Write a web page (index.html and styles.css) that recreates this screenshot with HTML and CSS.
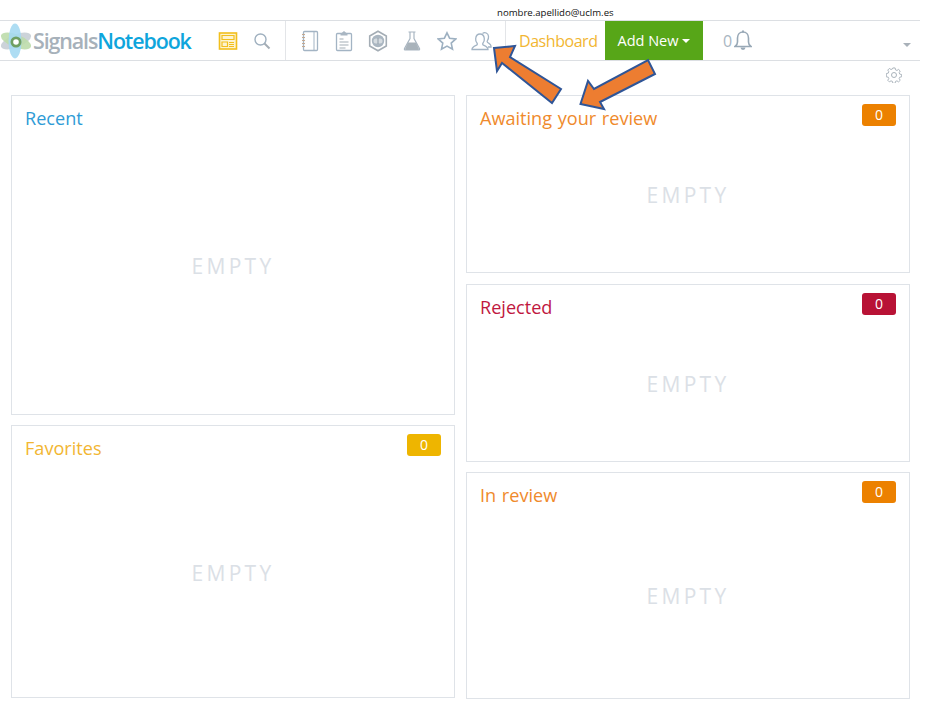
FILE: index.html
```html
<!DOCTYPE html>
<html lang="en">
<head>
<meta charset="utf-8">
<title>Signals Notebook</title>
<link rel="stylesheet" href="styles.css">
</head>
<body>
<div class="page">
  <div class="email">nombre.apellido@uclm.es</div>
  <header class="nav">
    <div class="logo">
      <svg class="logo-mark" width="33" height="36" viewBox="0 0 33 36">
        <ellipse cx="16" cy="18" rx="16" ry="6.500" transform="rotate(-22 16 18)" fill="#ccd3d9"/>
        <ellipse cx="16" cy="18" rx="16" ry="6.500" transform="rotate(22 16 18)" fill="#bcdcab" opacity=".9"/>
        <ellipse cx="15" cy="18" rx="6.500" ry="17.500" fill="#a5d9f2" opacity=".9"/>
        <circle cx="16" cy="19" r="5.500" fill="#6f9f63"/>
        <circle cx="16" cy="19" r="2.800" fill="#fff"/>
      </svg>
      <span class="logo-text"><span class="logo-grey">Signals</span><span class="logo-blue">Notebook</span></span>
    </div>
    <div class="group group-a">
      <svg class="ico" width="20" height="20" viewBox="0 0 20 20"><rect x="1.500" y="2" width="17" height="16" fill="#fdf3cf" stroke="#f2bf1d" stroke-width="1.600"/><path d="M4 4.500h12v4H4zM4 11h5.500v4.500H4z" fill="none" stroke="#f2bf1d" stroke-width="1.200"/><path d="M11 11.500h5M11 13.500h5M11 15.500h5" stroke="#f2bf1d" stroke-width="1"/></svg>
      <svg class="ico" width="18" height="18" viewBox="0 0 18 18"><circle cx="7.500" cy="7.500" r="5.500" fill="none" stroke="#9fb0bf" stroke-width="1.400"/><path d="M11.500 11.500l5 5" stroke="#a4adb5" stroke-width="2"/></svg>
    </div>
    <div class="group group-b">
      <svg class="ico ico-book" width="18" height="22" viewBox="0 0 18 22"><rect x="2.500" y="1.500" width="14" height="19" rx="1" fill="none" stroke="#a3b4c4" stroke-width="1.300"/><path d="M13 2v18" stroke="#a3b4c4"/><path d="M1 4.500h3M1 7.500h3M1 10.500h3M1 13.500h3M1 16.500h3" stroke="#c4a890"/></svg>
      <svg class="ico" width="18" height="22" viewBox="0 0 18 22"><rect x="1.500" y="3.500" width="15" height="17" rx="1" fill="none" stroke="#a3b4c4" stroke-width="1.300"/><path d="M5.500 5.500V4L9 1l3.500 3v1.500z" fill="#a9b6c2"/><path d="M4.500 9h4M4.500 12h9M4.500 15h9M4.500 18h6" stroke="#a4adb5" stroke-width="1.200"/></svg>
      <svg class="ico" width="20" height="22" viewBox="0 0 20 22"><path d="M10 1.200l8.300 4.800v10L10 20.800 1.700 16V6z" fill="none" stroke="#a4adb5" stroke-width="1.600"/><circle cx="10" cy="11" r="6.200" fill="#aab6c1"/><rect x="5.500" y="8.500" width="9" height="5" rx="2.500" fill="#d5dbe0"/><path d="M10 8v6" stroke="#8f9ca8"/></svg>
      <svg class="ico" width="18" height="20" viewBox="0 0 18 20"><path d="M5.500 1h7M7 1v6.500L1.500 17.500q-.5 1.500 1 1.500h13q1.500 0 1-1.500L11 7.500V1" fill="none" stroke="#a9b6c2" stroke-width="1.200"/><path d="M5 11.500h8l3 6.500q0 1-1 1H3q-1 0-1-1z" fill="#a9b3bb"/></svg>
      <svg class="ico ico-star" width="20" height="20" viewBox="0 0 20 20"><path d="M10 1.800l2.600 5.400 6.200.7-4.600 4.200 1.300 6.100L10 15.100l-5.500 3.100 1.300-6.100-4.600-4.200 6.200-.7z" fill="none" stroke="#9db0c1" stroke-width="1.600"/></svg>
      <svg class="ico" width="21" height="20" viewBox="0 0 21 20"><path d="M1 18.500c0-2.500 2-3.200 4.500-4.300 1-.5 1-1.500.4-2.300C5 10.800 4.500 9.300 4.700 7.500 5 4.700 6.800 3 9 3s4 1.700 4.300 4.500c.2 1.800-.3 3.300-1.200 4.400-.6.800-.6 1.800.4 2.300 2.500 1.100 4.500 1.800 4.500 4.300z" fill="none" stroke="#a3b4c4" stroke-width="1.300"/><path d="M11.500 2.500c2.300-1.700 5.700-.5 6 2.800.2 1.800-.3 3.200-1 4.200-.5.700-.5 1.500.2 2 1.500 1 3.300 1.500 3.300 3.500v1h-3" fill="none" stroke="#a3b4c4" stroke-width="1.300"/></svg>
    </div>
    <a class="dash">Dashboard</a>
    <button class="add">Add New<span class="caret caret-white"></span></button>
    <div class="notif">
      <span class="notif-count">0</span>
      <svg width="18" height="21" viewBox="0 0 18 21"><path d="M1 16.500c1.500-1 2.500-2 2.500-4.500V8c0-3.500 2.200-6 5.500-6s5.500 2.500 5.500 6v4c0 2.500 1 3.500 2.500 4.500z" fill="none" stroke="#98a8b6" stroke-width="1.600"/><path d="M6.500 17.500a2.500 2.500 0 0 0 5 0z" fill="#98a8b6"/><rect x="8" y="0.500" width="2" height="2" fill="#98a8b6"/></svg>
    </div>
    <span class="user-caret"><span class="caret caret-grey"></span></span>
  </header>
  <div class="tools">
    <svg width="16" height="16" viewBox="0 0 16 16"><path d="M6.800.8h2.400l.4 2 1.500.6 1.700-1.100 1.700 1.700-1.100 1.700.6 1.500 2 .4v2.400l-2 .4-.6 1.500 1.100 1.700-1.700 1.700-1.700-1.100-1.500.6-.4 2H6.800l-.4-2-1.500-.6-1.700 1.100-1.700-1.700 1.100-1.700-.6-1.500-2-.4V6.600l2-.4.6-1.500-1.100-1.700 1.700-1.700 1.700 1.100 1.500-.6z" transform="translate(.3 .2) scale(.96)" fill="none" stroke="#a9b3bb"/><circle cx="8" cy="8" r="2.500" fill="none" stroke="#a9b3bb"/></svg>
  </div>
  <main class="board">
    <div class="column">
      <section class="card card-recent">
        <h2 class="title t-blue">Recent</h2>
        <div class="empty">EMPTY</div>
      </section>
      <section class="card card-fav">
        <h2 class="title t-yellow">Favorites</h2>
        <span class="badge b-yellow">0</span>
        <div class="empty">EMPTY</div>
      </section>
    </div>
    <div class="column">
      <section class="card card-await">
        <h2 class="title t-orange">Awaiting your review</h2>
        <span class="badge b-orange">0</span>
        <div class="empty">EMPTY</div>
      </section>
      <section class="card card-rej">
        <h2 class="title t-red">Rejected</h2>
        <span class="badge b-red">0</span>
        <div class="empty">EMPTY</div>
      </section>
      <section class="card card-inrev">
        <h2 class="title t-orange">In review</h2>
        <span class="badge b-orange">0</span>
        <div class="empty">EMPTY</div>
      </section>
    </div>
  </main>
</div>
<svg class="arrows" width="947" height="728" viewBox="0 0 947 728">
  <path d="M494 48L515 46 510 57 561 89 552 103 502 63 497 71z" fill="#ed7d31" stroke="#2f5597" stroke-width="2"/>
  <path d="M580.500 104L588 81 594 89 648 60 655 74 600 102 604 109z" fill="#ed7d31" stroke="#2f5597" stroke-width="2"/>
</svg>
</body>
</html>
```
FILE: styles.css
```css
* { box-sizing: border-box; }
html, body { margin: 0; padding: 0; background: #fff; }
body { font-family: "Open Sans", "Liberation Sans", sans-serif; width: 947px; height: 728px; overflow: hidden; position: relative; }
.page { width: 920px; }
.email { height: 20px; padding: 6px 0 0 497px; font-size: 9.600px; line-height: 13px; color: #111; white-space: nowrap; }
.nav { height: 41px; border-top: 1px solid #dcdfe3; border-bottom: 1px solid #dcdfe3; display: flex; align-items: center; }
.logo { display: flex; align-items: center; width: 206px; flex: none; }
.logo-mark { flex: none; }
.logo-text { font-family: "Open Sans", sans-serif; font-weight: 600; font-size: 21.400px; letter-spacing: -1.100px; white-space: nowrap; }
.logo-grey { color: #a7b1ba; }
.logo-blue { color: #0ea5dc; }
.group { display: flex; align-items: center; height: 39px; flex: none; }
.group-a { width: 80px; padding-left: 12px; gap: 15px; border-right: 1px solid #e3e5e8; }
.group-b { width: 220px; padding-left: 15px; border-right: 1px solid #e3e5e8; gap: 15px; }
.ico { flex: none; }
.ico-book { margin-right: 1px; }
.ico-star { margin-left: 1px; margin-right: -1px; }
.dash { font-size: 16px; letter-spacing: -0.450px; color: #f2b632; margin-left: 13px; width: 86px; flex: none; }
.add { width: 98px; height: 39px; border: 0; background: #57a618; color: #fff; font: 500 14.500px "Open Sans", sans-serif; padding: 0; display: flex; align-items: center; justify-content: center; flex: none; }
.caret { display: inline-block; width: 0; height: 0; border-left: 4px solid transparent; border-right: 4px solid transparent; }
.caret-white { border-top: 4px solid #fff; margin-left: 4px; }
.caret-grey { border-top: 4px solid #a9b1b9; border-left-width: 4.500px; border-right-width: 4.500px; }
.notif { display: flex; align-items: center; margin-left: 20px; flex: none; }
.notif-count { font-size: 16px; color: #a9b6c2; margin-right: 2px; }
.user-caret { margin-left: auto; margin-right: 9px; padding-top: 8px; display: flex; }
.tools { height: 34px; display: flex; justify-content: flex-end; padding: 6px 18px 0 0; }
.board { display: grid; grid-template-columns: 444px 444px; column-gap: 11px; padding-left: 11px; }
.column { display: flex; flex-direction: column; gap: 11px; }
.card { position: relative; border: 1px solid #dfe3e8; padding: 10px 13px; }
.card-recent { height: 320px; }
.card-fav { height: 273px; margin-top: -1px; }
.card-await { height: 178px; }
.card-rej { height: 178px; }
.card-inrev { height: 227px; margin-top: -1px; }
.title { margin: 0; font-weight: 400; font-size: 18.100px; word-spacing: 1px; line-height: 25px; }
.t-blue { color: #2e9bd6; }
.t-yellow { color: #f2b632; }
.t-orange { color: #ef8a2c; }
.t-red { color: #c0183f; }
.badge { position: absolute; top: 8px; right: 13px; width: 34px; height: 22px; border-radius: 3px; color: #fff; font-size: 14px; line-height: 22px; text-align: center; }
.b-yellow { background: #eeb500; }
.b-orange { background: #ec8100; }
.b-red { background: #b81235; }
.empty { text-align: center; color: #dbe0e6; font-size: 21px; letter-spacing: 3.300px; line-height: 28px; }
.card-recent .empty { margin-top: 121px; }
.card-fav .empty { margin-top: 98px; }
.card-await .empty, .card-rej .empty { margin-top: 50px; }
.card-inrev .empty { margin-top: 74px; }
.arrows { position: absolute; left: 0; top: 0; pointer-events: none; }
```
